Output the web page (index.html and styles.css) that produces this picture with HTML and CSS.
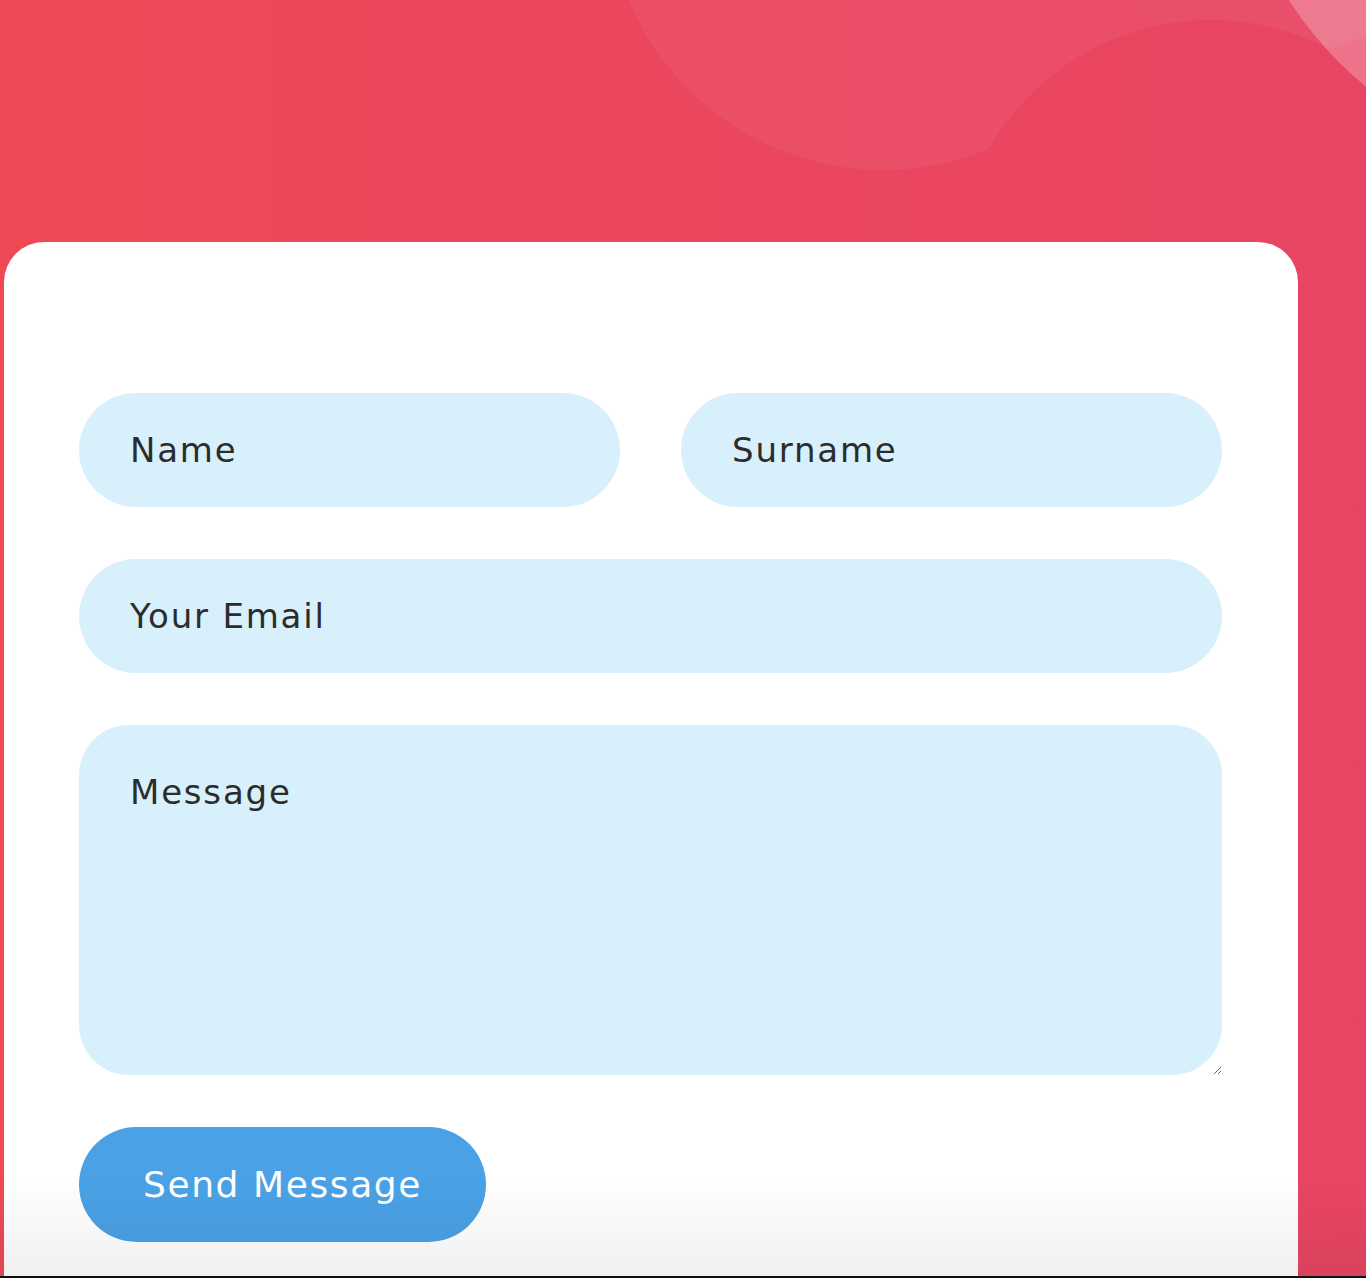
FILE: index.html
```html
<!DOCTYPE html>
<html lang="en">
<head>
<meta charset="utf-8">
<title>Contact</title>
<link rel="stylesheet" href="styles.css">
</head>
<body>
<div class="page">
  <svg class="decor" width="1366" height="250" viewBox="0 0 1366 250" aria-hidden="true">
    <defs>
      <mask id="cut">
        <rect width="1366" height="250" fill="#fff"/>
        <circle cx="1211" cy="276" r="256" fill="#000"/>
      </mask>
    </defs>
    <g mask="url(#cut)">
      <g fill="#fff" opacity="0.05">
        <circle cx="883" cy="-105" r="275"/>
        <circle cx="1230" cy="-360" r="420"/>
      </g>
    </g>
    <circle cx="1600" cy="-200" r="370" fill="#fff" fill-opacity="0.25"/>
  </svg>
  <main class="card">
    <form class="form">
      <input class="field" type="text" placeholder="Name">
      <input class="field" type="text" placeholder="Surname">
      <input class="field wide" type="email" placeholder="Your Email">
      <textarea class="field area wide" placeholder="Message"></textarea>
      <div class="actions wide">
        <button class="send" type="button">Send Message</button>
      </div>
    </form>
  </main>
  <div class="shade"></div>
</div>
</body>
</html>
```

FILE: styles.css
```css
* { box-sizing: border-box; }
html, body { margin: 0; padding: 0; }
body {
  font-family: "DejaVu Sans", "Noto Sans", "Liberation Sans", sans-serif;
  background: #e84562;
}
.page {
  position: relative;
  height: 1278px;
  overflow: hidden;
  background: linear-gradient(90deg, #ed4955 0%, #ea4660 60%, #e84563 100%);
  border-bottom: 2px solid #111;
  padding-top: 242px;
  padding-left: 4px;
}
.decor {
  position: absolute;
  left: 0;
  top: 0;
}
.card {
  position: relative;
  width: 1294px;
  height: 1100px;
  background: #fff;
  border-radius: 40px 40px 0 0;
  padding: 151px 76px 0 75px;
}
.form {
  display: grid;
  grid-template-columns: 1fr 1fr;
  column-gap: 61px;
  row-gap: 52px;
}
.wide { grid-column: 1 / -1; }
.field {
  display: block;
  width: 100%;
  height: 114px;
  border: none;
  outline: none;
  border-radius: 57px;
  background: #d8f0fb;
  padding: 0 51px;
  font-family: inherit;
  font-size: 34px;
  letter-spacing: 1.8px;
  color: #2a2a2a;
}
.field::placeholder { color: #2c2c2c; opacity: 1; }
.area {
  height: 350px;
  border-radius: 50px;
  padding: 44px 51px;
  line-height: 46px;
  resize: both;
}
.actions { display: flex; }
.send {
  width: 407px;
  height: 115px;
  border: none;
  border-radius: 58px;
  background: #4aa1e5;
  color: #fff;
  font-family: inherit;
  font-size: 36px;
  letter-spacing: 1.6px;
  cursor: pointer;
}
.shade {
  position: absolute;
  left: 0;
  right: 0;
  bottom: 0;
  height: 100px;
  background: linear-gradient(180deg, rgba(0,0,0,0) 0%, rgba(0,0,0,0.06) 100%);
  pointer-events: none;
}
```
